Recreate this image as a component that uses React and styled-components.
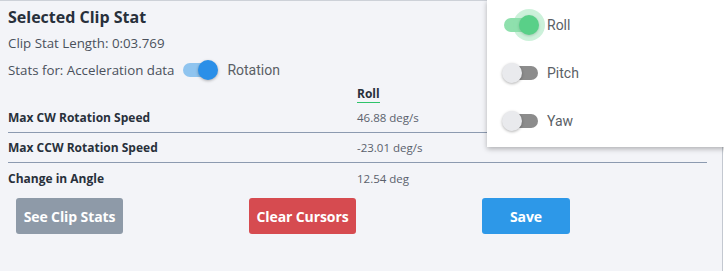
import React, { useState } from "react";
import styled, { createGlobalStyle } from "styled-components";

const GlobalStyle = createGlobalStyle`
  html, body {
    margin: 0;
    padding: 0;
    background: #ffffff;
  }
  body {
    font-family: "Open Sans", "Liberation Sans", sans-serif;
    color: #2b3340;
  }
`;

const Page = styled.div`
  position: relative;
  width: 724px;
  height: 271px;
  overflow: hidden;
`;

const Panel = styled.div`
  box-sizing: border-box;
  width: 723px;
  height: 271px;
  background: #f3f4f8;
  border-top: 1px solid #cdd1d8;
  border-right: 1px solid #c3c8d0;
  padding: 4px 15px 0 8px;
`;

const Title = styled.h2`
  margin: 0;
  font-size: 16px;
  font-weight: 700;
  line-height: 24px;
  color: #28303b;
`;

const InfoLine = styled.div`
  display: flex;
  align-items: center;
  font-size: 13.3px;
  color: #4a515c;
  height: ${(p) => p.h || 26}px;
`;

const ToggleWrap = styled.span`
  display: inline-flex;
  align-items: center;
  margin-left: ${(p) => p.ml || 0}px;
  cursor: pointer;
`;

const Track = styled.span`
  position: relative;
  display: inline-block;
  width: 34px;
  height: 14px;
  border-radius: 7px;
  background: ${(p) => (p.on ? p.light : "#8c8c8c")};
`;

const Thumb = styled.span`
  position: absolute;
  top: -3px;
  left: ${(p) => (p.on ? 15 : -2)}px;
  width: 20px;
  height: 20px;
  border-radius: 50%;
  background: ${(p) => (p.on ? p.color : "#e9eaed")};
  box-shadow: 0 1px 3px rgba(0, 0, 0, 0.3);
  &::before {
    content: "";
    display: ${(p) => (p.halo ? "block" : "none")};
    position: absolute;
    left: -6px;
    top: -6px;
    width: 32px;
    height: 32px;
    border-radius: 50%;
    background: ${(p) => p.light};
    opacity: 0.45;
  }
`;

const ToggleLabel = styled.span`
  font-family: Roboto, "Liberation Sans", sans-serif;
  font-size: 14px;
  color: #5a5f66;
  margin-left: ${(p) => p.gap || 10}px;
`;

const Table = styled.div`
  margin-top: 3px;
  display: grid;
  grid-template-columns: 349px 1fr;
`;

const HeadCell = styled.div`
  height: 17px;
  display: flex;
  align-items: center;
`;

const ColHead = styled.span`
  font-size: 12px;
  font-weight: 700;
  color: #28303b;
  line-height: 16px;
  border-bottom: 1px solid #2ec36a;
`;

const Cell = styled.div`
  height: 30px;
  display: flex;
  align-items: center;
  font-size: ${(p) => (p.bold ? 12 : 11.5)}px;
  font-weight: ${(p) => (p.bold ? 700 : 400)};
  color: ${(p) => (p.bold ? "#28303b" : "#5a616c")};
  border-bottom: ${(p) => (p.last ? "none" : "1px solid #8c9ab0")};
  box-sizing: border-box;
`;

const Buttons = styled.div`
  display: flex;
  gap: 126px;
  padding-left: 8px;
  margin-top: 5px;
`;

const Button = styled.button`
  height: 36px;
  width: ${(p) => p.w}px;
  border: none;
  border-radius: 3px;
  background: ${(p) => p.bg};
  color: #ffffff;
  font-family: "Open Sans", "Liberation Sans", sans-serif;
  font-size: 14px;
  font-weight: 700;
  letter-spacing: -0.1px;
  cursor: pointer;
  padding: 0;
`;

const Menu = styled.div`
  position: absolute;
  top: 0;
  left: 487px;
  width: 240px;
  height: 147px;
  background: #ffffff;
  box-shadow: 0 2px 5px rgba(0, 0, 0, 0.28);
  display: flex;
  flex-direction: column;
  padding-top: 1px;
  box-sizing: border-box;
`;

const MenuItem = styled.div`
  height: 48px;
  display: flex;
  align-items: center;
  padding-left: 17px;
`;

function Toggle({ on, color, light, halo, label, gap, ml }) {
  return (
    <ToggleWrap ml={ml}>
      <Track on={on} light={light}>
        <Thumb on={on} color={color} light={light} halo={halo} />
      </Track>
      <ToggleLabel gap={gap}>{label}</ToggleLabel>
    </ToggleWrap>
  );
}

const rows = [
  ["Max CW Rotation Speed", "46.88 deg/s"],
  ["Max CCW Rotation Speed", "-23.01 deg/s"],
  ["Change in Angle", "12.54 deg"],
];

export default function App() {
  const [axes] = useState({ Roll: true, Pitch: false, Yaw: false });

  return (
    <Page>
      <GlobalStyle />
      <Panel>
        <Title>Selected Clip Stat</Title>
        <InfoLine h={28}>Clip Stat Length: 0:03.769</InfoLine>
        <InfoLine h={26}>
          Stats for: Acceleration data
          <Toggle
            on
            ml={9}
            gap={10}
            color="#2a8fe8"
            light="#8fc4ef"
            label="Rotation"
          />
        </InfoLine>
        <Table>
          <HeadCell />
          <HeadCell>
            <ColHead>Roll</ColHead>
          </HeadCell>
          {rows.map(([name, value], i) => (
            <React.Fragment key={name}>
              <Cell bold last={i === rows.length - 1}>
                {name}
              </Cell>
              <Cell last={i === rows.length - 1}>{value}</Cell>
            </React.Fragment>
          ))}
        </Table>
        <Buttons>
          <Button w={107} bg="#8e9aa8">
            See Clip Stats
          </Button>
          <Button w={107} bg="#d64b50">
            Clear Cursors
          </Button>
          <Button w={88} bg="#2d98e8">
            Save
          </Button>
        </Buttons>
      </Panel>
      <Menu>
        {Object.entries(axes).map(([name, on]) => (
          <MenuItem key={name}>
            <Toggle
              on={on}
              halo={on}
              gap={9}
              color="#2ec36a"
              light="#8fe0ad"
              label={name}
            />
          </MenuItem>
        ))}
      </Menu>
    </Page>
  );
}
